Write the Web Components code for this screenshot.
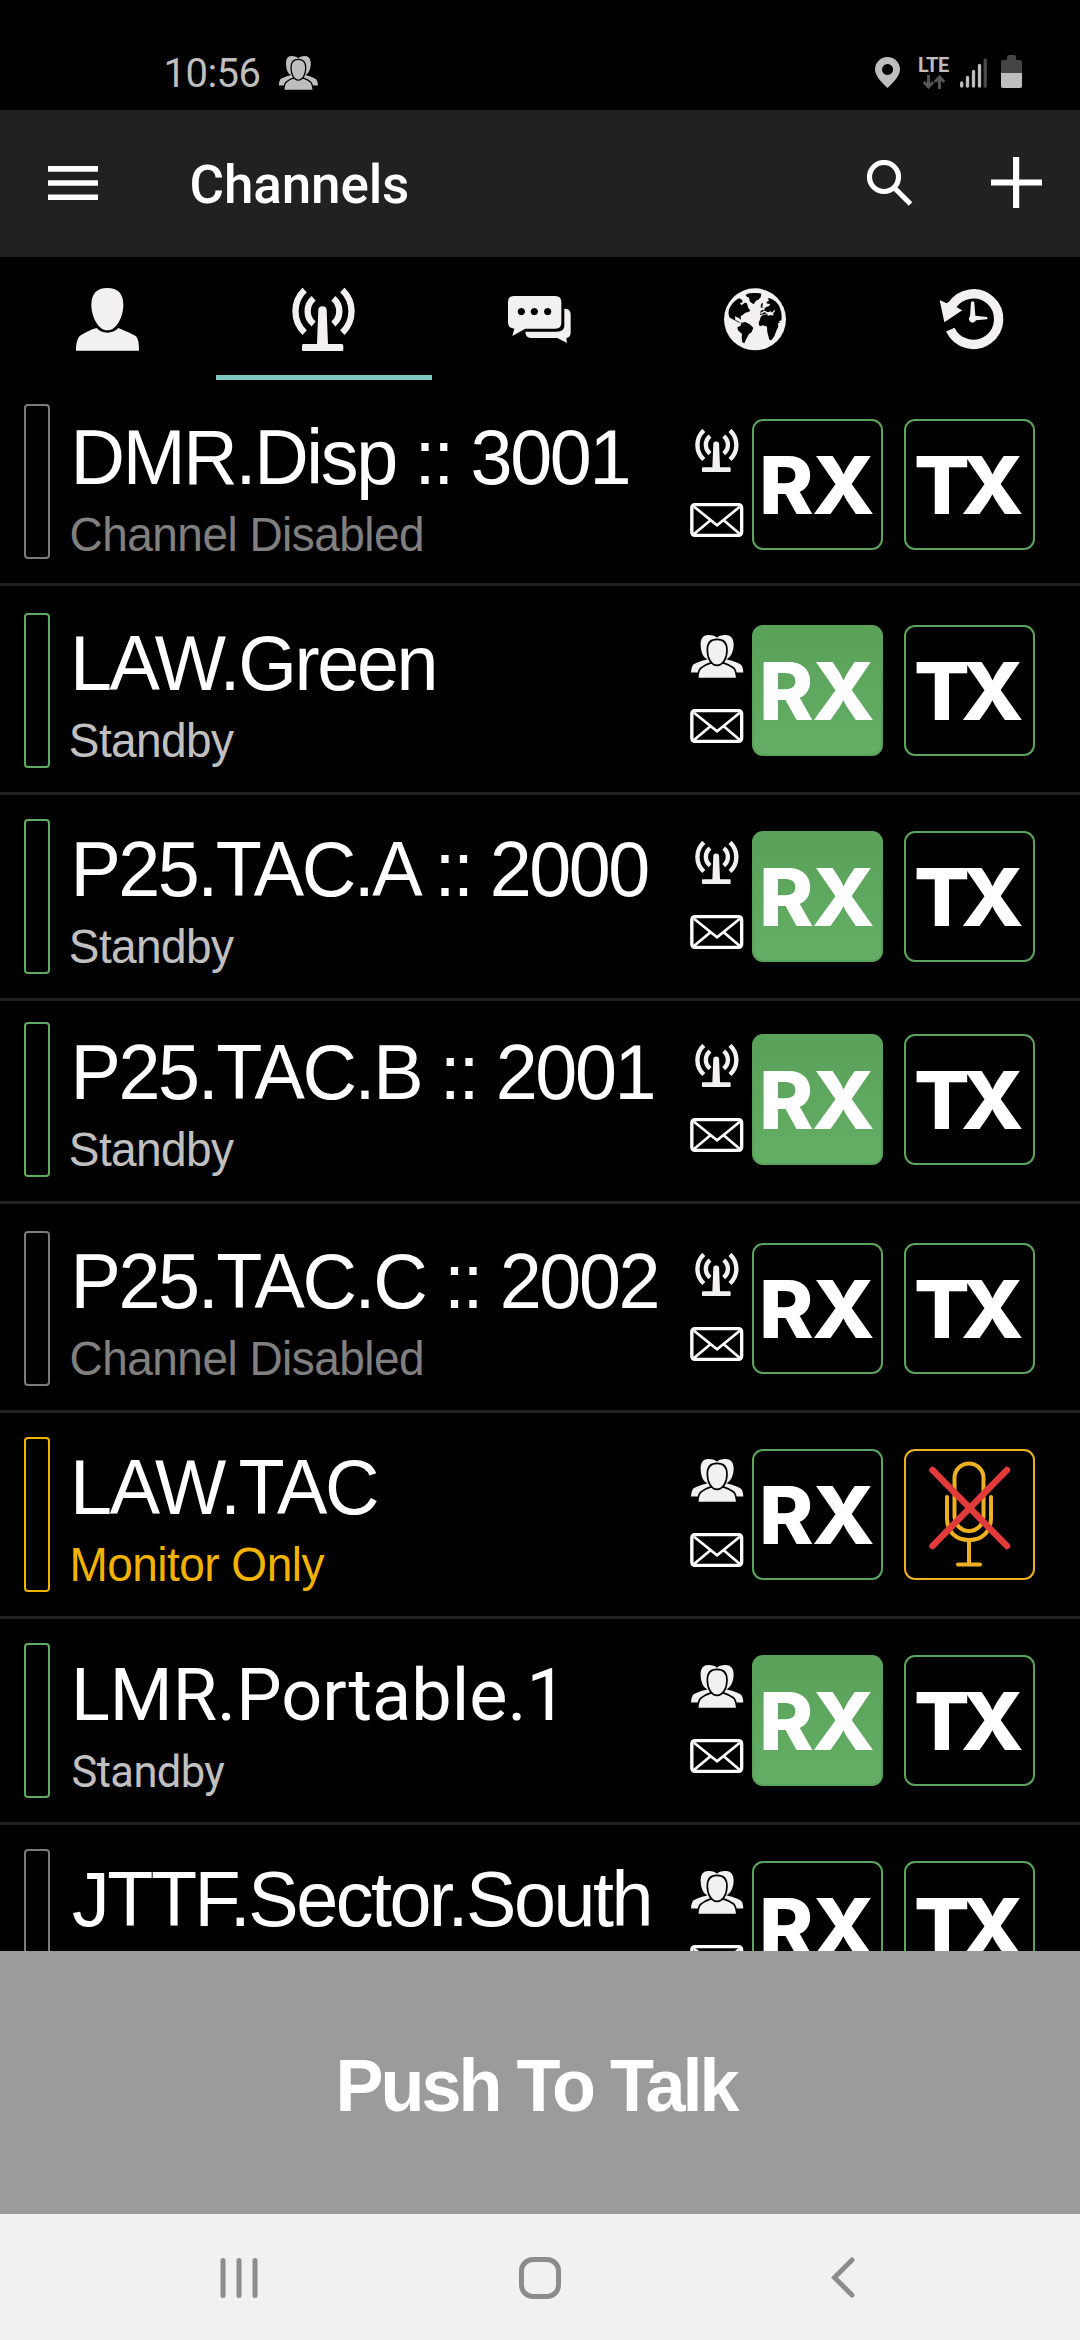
<!DOCTYPE html>
<html lang="en">
<head>
<meta charset="utf-8">
<title>Channels</title>
<style>
html,body{margin:0;padding:0;background:#000}
body{width:1080px;height:2340px;overflow:hidden;font-family:"Liberation Sans",sans-serif;color:#fff}
</style>
</head>
<body>
<ptt-app></ptt-app>
<script>
const ICONS = {
  person: ['0 0 240 240', `<g fill="currentColor"><path d="M118 24C150 24 166 42 166 74C166 112 144 151 118 151C92 151 70 112 70 74C70 42 86 24 118 24Z"/><path d="M24 212C24 190 28 175 36 167C50 158 70 148 86 144Q98 158 118 158Q138 158 151 144C165 150 190 160 203 168C211 176 213 190 213 212Z"/></g>`],
  antenna: ['24 24 190 189', `<g fill="none" stroke="currentColor" stroke-width="19"><path d="M62 30A88 88 0 0 0 62 158"/><path d="M89 55A50 50 0 0 0 89 132"/><path d="M175 30A88 88 0 0 1 175 158"/><path d="M148 55A50 50 0 0 1 148 132"/></g><path fill="currentColor" d="M103 90Q103 79 115.500 79Q128 79 128 90L132 192H174Q178 192 178 197V209Q178 213 174 213H58Q54 213 54 209V197Q54 192 58 192H99Z"/>`],
  chat: ['0 0 240 240', `<g fill="currentColor"><path fill-rule="evenodd" d="M41 48H166Q184 48 184 66V129Q184 146 166 146H76L37 168L43 146Q24 144 24 129V66Q24 48 41 48ZM64 84a11 11 0 1 0 .1 0ZM103 84a11 11 0 1 0 .1 0ZM143 84a11 11 0 1 0 .1 0Z"/><path d="M193 86Q212 86 212 103V158Q212 171 199 174L201 189L172 174H92Q76 172 76 155H170Q193 155 193 138Z"/></g>`],
  globe: ['3 0 240 240', `<circle cx="120" cy="118" r="93" fill="currentColor"/><g fill="#000"><path d="M92 45Q98 38 118 39Q132 38 139 41L137 52L130 59Q121 61 116 73L105 65L102 53Q94 52 92 45Z"/><path d="M72 55L81 59L83 67L75 69L79 76L90 68L96 70L99 82L106 92L100 96L91 98L83 105L77 109L78 119L70 113L60 109L61 120L68 123L75 128L78 129L75 130L63 123L50 116L43 112Q38 100 42 88Q50 68 68 57Z"/><path d="M79 128L91 126L104 133L115 143L110 156L102 162L92 180L88 190L82 187L80 173L81 162L69 151L67 142L77 137Z"/><path d="M162 54Q187 62 195 84Q202 104 199 121L191 124L195 129L189 129L190 140L184 152L178 169L169 181L163 179L157 157L156 140L144 136L134 139L131 130L137 112L140 107L157 102L158 107L170 105L174 107L176 101L160 97L151 102L135 105L137 93L143 89L146 83L157 78L165 73L154 70L156 65L163 61L158 57Z"/><path d="M144 68L142 80L145 82L137 83L138 72Z"/></g><g fill="none" stroke="currentColor" stroke-width="4"><path d="M137 101L148 94L158 99L166 96L171 101L179 91"/><path d="M144 90L151 80L160 77L164 72"/></g>`],
  history: ['6 0 240 240', `<path fill="none" stroke="currentColor" stroke-width="28" d="M61 149A76 76 0 1 0 65 78"/><path fill="currentColor" d="M29 60L50 70L69 58L74 79L97 91L43 127Z"/><path fill="currentColor" d="M123 67Q128 60 133 67L136 107L171 111Q175 115 171 118L138 121A11 11 0 1 1 120 109Z"/>`],
  group: ['0 0 160 130', `<g fill="currentColor"><path d="M54 0C68 0 78 4 81 9C84 4 94 0 108 0C124 0 131 13 131 29C131 49 122 70 109 73C128 78 148 84 154 91Q159 97 160 113H3Q4 97 9 90C15 84 34 78 53 73C40 70 32 51 32 29C32 13 38 0 54 0Z"/></g><g fill="currentColor" stroke="#000" stroke-width="5"><path d="M23 132C24 112 27 104 34 99Q44 90 61 85H102Q120 91 130 99Q138 106 141 132Z"/><path d="M81 13C101 13 111 25 111 45C111 70 99 92 81 92C64 92 52 70 52 45C52 25 62 13 81 13Z"/></g>`],
  mail: ['0 0 160 102', `<g fill="none" stroke="currentColor"><rect x="5.500" y="5" width="149" height="92" rx="9" stroke-width="10"/><path stroke-width="8" d="M12 11L81 67L149 11M62 51L12 93M100 51L149 93"/></g>`],
  mic: ['0 0 131 131', `<g fill="none" stroke="#edb020" stroke-width="4" stroke-linecap="round"><rect x="50.500" y="14.500" width="29" height="67.500" rx="14.500"/><path d="M43 48V69C43 83 52 91 65 91S87 83 87 69V48M65 91V115.500M54 115.500H76"/></g><path stroke="#e13a3a" stroke-width="6.500" stroke-linecap="round" d="M28.500 21L103 97M103 21L28.500 97"/>`],
  menu: ['0 0 50 34', `<path fill="#fff" d="M0 0h50v5.700H0zM0 14.200h50v5.500H0zM0 28.400h50v5.600H0z"/>`],
  search: ['0 0 46 46', `<g fill="none" stroke="#fff" stroke-width="5.200"><circle cx="17" cy="17" r="14.500"/><path d="M28 28.500L43.500 44"/></g>`],
  plus: ['0 0 51 51', `<path fill="#fff" d="M22 0h6.200v22.500H51v6H28.200V51H22V28.500H0v-6H22z"/>`],
  pin: ['0 0 25 31', `<path fill="#bebebe" fill-rule="evenodd" d="M12.500 0C19.500 0 25 5.500 25 12.500C25 19 18 25.500 12.500 31C7 25.500 0 19 0 12.500C0 5.500 5.500 0 12.500 0ZM12.500 7a5.500 5.500 0 1 0 .1 0Z"/>`],
  arrows: ['0 0 22 14', `<g fill="none" stroke="#555" stroke-width="3"><path d="M5.500 0V12M.900 7L5.500 12L10.100 7M16.500 14V2M11.900 7L16.500 2L21.100 7"/></g>`],
  signal: ['0 0 27 30', `<g stroke-width="3.300" stroke-linecap="round" stroke="#bebebe"><path d="M1.700 25V28M7.500 19.500V28M13.500 13.500V28M19.500 7.500V28"/><path stroke="#4a4a4a" d="M25.200 2V28"/></g>`],
  battery: ['0 0 21 33', `<path fill="#454545" d="M6 2Q6 0 8 0h5Q15 0 15 2V5H19Q21 5 21 7V18H0V7Q0 5 2 5H6Z"/><path fill="#bebebe" d="M0 18H21V31Q21 33 19 33H2Q0 33 0 31Z"/>`],
  recents: ['0 0 38 40', `<path stroke="#8c8c8c" stroke-width="5" stroke-linecap="round" d="M3 2.500V37.500M19 2.500V37.500M35 2.500V37.500"/>`],
  home: ['0 0 42 42', `<rect x="2.500" y="2.500" width="37" height="37" rx="11.500" fill="none" stroke="#8c8c8c" stroke-width="5"/>`],
  back: ['0 0 24 41', `<path fill="none" stroke="#8c8c8c" stroke-width="5" stroke-linecap="round" d="M21 3L3.500 20.500L21 38"/>`]
};

/* <ui-icon name w h> : one glyph from the icon table */
customElements.define('ui-icon', class extends HTMLElement {
  connectedCallback() {
    const [vb, body] = ICONS[this.getAttribute('name')];
    const w = this.getAttribute('w'), h = this.getAttribute('h');
    this.attachShadow({mode: 'open'}).innerHTML =
      `<style>:host{display:block;flex:none;width:${w}px;height:${h}px}svg{display:block;width:100%;height:100%}</style><svg viewBox="${vb}" preserveAspectRatio="none">${body}</svg>`;
  }
});

/* <fit-text w font lh sy> : a single line tracked so that its ink spans w pixels; sy stretches it upwards */
const ctx = document.createElement('canvas').getContext('2d');
customElements.define('fit-text', class extends HTMLElement {
  connectedCallback() {
    const text = this.textContent, w = +this.getAttribute('w'), font = this.getAttribute('font');
    ctx.font = font;
    const m = ctx.measureText(text);
    const ls = (w - m.actualBoundingBoxRight - m.actualBoundingBoxLeft) / (text.length - 1);
    const size = parseFloat(font.match(/([\d.]+)px/)[1]);
    this.attachShadow({mode: 'open'}).innerHTML =
      `<style>:host{display:block;flex:none;width:${w}px}span{display:block;white-space:pre;font:${font};line-height:${this.getAttribute('lh')}px;letter-spacing:${ls.toFixed(3)}px;margin-left:${m.actualBoundingBoxLeft.toFixed(2)}px;transform:scaleY(${this.getAttribute('sy') || 1});transform-origin:0 calc(50% + ${(size * .3465).toFixed(2)}px)}</style><span><slot></slot></span>`;
  }
});

customElements.define('status-bar', class extends HTMLElement {
  connectedCallback() {
    this.attachShadow({mode: 'open'}).innerHTML = `<style>
      :host{display:flex;height:110px;box-sizing:border-box;background:#000;color:#bebebe;align-items:flex-start;padding:55px 58px 0 166.500px}
      .g{margin:1px 0 0 18px}.sp{flex:1}.lte{display:flex;flex-direction:column;align-items:center;margin:0 11px 0 19px}
      </style>
      <fit-text w="93" lh="38" font="40px Roboto">10:56</fit-text>
      <ui-icon class="g" name="group" w="40" h="34"></ui-icon><div class="sp"></div>
      <ui-icon name="pin" w="25" h="31" style="margin-top:2px"></ui-icon>
      <div class="lte"><fit-text w="30" lh="20" font="700 20px Roboto">LTE</fit-text><ui-icon name="arrows" w="22" h="14"></ui-icon></div>
      <ui-icon name="signal" w="27" h="30" style="margin:3px 14px 0 0"></ui-icon>
      <ui-icon name="battery" w="21" h="33"></ui-icon>`;
  }
});

customElements.define('app-bar', class extends HTMLElement {
  connectedCallback() {
    this.attachShadow({mode: 'open'}).innerHTML = `<style>
      :host{display:flex;height:147px;box-sizing:border-box;background:#212121;align-items:flex-start;padding:0 38px 0 48px}
      fit-text{margin:2px 0 0 93.500px}.sp{flex:1}
      </style>
      <ui-icon name="menu" w="50" h="34" style="margin-top:56px"></ui-icon>
      <fit-text w="216.500" lh="147" font="500 53px Roboto">${this.getAttribute('heading')}</fit-text>
      <div class="sp"></div>
      <ui-icon name="search" w="46" h="46" style="margin:50px 78.500px 0 0"></ui-icon>
      <ui-icon name="plus" w="51" h="51" style="margin-top:47px"></ui-icon>`;
  }
});

customElements.define('tab-bar', class extends HTMLElement {
  connectedCallback() {
    this.attachShadow({mode: 'open'}).innerHTML = `<style>
      :host{display:flex;height:123px;background:#000;color:#f2f0f1}
      div{flex:1;display:flex;flex-direction:column;align-items:center;box-sizing:border-box;padding-top:23px;border-bottom:5px solid transparent}
      .on{border-color:#7cc8bf;padding-top:31px}
      </style>
      <div><ui-icon name="person" w="80" h="80"></ui-icon></div>
      <div class="on"><ui-icon name="antenna" w="63.300" h="63"></ui-icon></div>
      <div><ui-icon name="chat" w="80" h="80"></ui-icon></div>
      <div><ui-icon name="globe" w="80" h="80"></ui-icon></div>
      <div><ui-icon name="history" w="80" h="80"></ui-icon></div>`;
  }
});

customElements.define('key-button', class extends HTMLElement {
  connectedCallback() {
    const label = this.getAttribute('label');
    this.attachShadow({mode: 'open'}).innerHTML = `<style>
      :host{display:flex;flex:none;box-sizing:border-box;width:131px;height:131px;border:2px solid #5ca35c;border-radius:11px;color:#fff}
      :host([on]){background:linear-gradient(#5aa15a,#63ae64);border-color:#5ba25b}
      :host([muted]){border-color:#edb020}
      fit-text{margin-left:9px}:host([label=TX]) fit-text{margin-left:10px}
      ui-icon{margin:-2px}
      </style>` + (label
        ? `<fit-text w="${label === 'TX' ? 106 : 110}" lh="126" sy=".96" font="800 82.500px Inter">${label}</fit-text>`
        : `<ui-icon name="mic" w="131" h="131"></ui-icon>`);
  }
});

customElements.define('channel-row', class extends HTMLElement {
  connectedCallback() {
    const a = (n, d) => this.getAttribute(n) || d;
    const roboto = this.hasAttribute('roboto');
    const state = a('state');
    const bar = {standby: '#60ab62', disabled: '#7b7b7b', monitor: '#f2b200'}[state];
    const sub = {standby: '#c0c0c0', disabled: '#808080', monitor: '#f2b200'}[state];
    const label = {standby: 'Standby', disabled: 'Channel Disabled', monitor: 'Monitor Only'}[state];
    const sw = roboto ? 152.8 : {standby: 163.3, disabled: 350.6, monitor: 252}[state];
    const sx = roboto ? 2.5 : {standby: .8, disabled: 1.5, monitor: 2.4}[state];
    const shift = +a('shift', 0);
    this.attachShadow({mode: 'open'}).innerHTML = `<style>
      :host{display:flex;flex:none;align-items:flex-start;box-sizing:content-box;height:155px;padding:${a('top')}px 45px 24px 24px;border-bottom:3px solid #212121}
      .bar{flex:none;box-sizing:border-box;width:26px;height:155px;border:2px solid ${bar};border-radius:4px}
      .text{flex:1;margin:${shift + (roboto ? 3 : 1)}px 0 0 20px}
      .name{margin-left:${a('x', 6)}px}
      .sub{margin-left:${sx}px;color:${sub}}
      .kinds{flex:none;display:flex;flex-direction:column;align-items:center;width:54px;margin:${22 + shift}px 8px 0 0;color:#f2f0f1}
      .mail{color:#fff;margin-top:31px}
      .keys{display:flex;gap:21px;margin-top:${12 + shift}px}
      </style>
      <div class="bar"></div>
      <div class="text">
        <fit-text class="name" w="${a('w')}" lh="100" ${roboto ? 'font="72px Roboto"' : `sy="1.04" font="75.5px 'Liberation Sans'"`}>${a('name')}</fit-text>
        ${this.hasAttribute('bare') ? '' : `<fit-text class="sub" w="${sw}" lh="54" ${roboto ? 'font="43.5px Roboto"' : `sy="1.04" font="46px 'Liberation Sans'"`}>${label}</fit-text>`}
      </div>
      <div class="kinds">
        ${a('kind') === 'antenna' ? '<ui-icon name="antenna" w="44" h="43"></ui-icon>' : '<ui-icon name="group" w="53.300" h="43"></ui-icon>'}
        <ui-icon class="mail" name="mail" w="53.500" h="34"></ui-icon>
      </div>
      <div class="keys"><key-button label="RX" ${this.hasAttribute('rx') ? 'on' : ''}></key-button>${state === 'monitor' ? '<key-button muted></key-button>' : '<key-button label="TX"></key-button>'}</div>`;
  }
});

customElements.define('talk-button', class extends HTMLElement {
  connectedCallback() {
    this.attachShadow({mode: 'open'}).innerHTML = `<style>
      :host{display:flex;height:263px;background:#9b9b9b;color:#fff;justify-content:center}
      fit-text{margin-top:7px}
      </style><fit-text w="401" lh="257" sy="1.04" font="bold 72px 'Liberation Sans'">Push To Talk</fit-text>`;
  }
});

customElements.define('nav-bar', class extends HTMLElement {
  connectedCallback() {
    this.attachShadow({mode: 'open'}).innerHTML = `<style>
      :host{display:flex;height:126px;box-sizing:border-box;background:#f1f1f1;justify-content:space-between;padding:43px 225px 0 219.500px}
      </style><ui-icon name="recents" w="38" h="40" style="margin-top:1px"></ui-icon><ui-icon name="home" w="42" h="42" style="margin-right:8.500px"></ui-icon><ui-icon name="back" w="24" h="41"></ui-icon>`;
  }
});

customElements.define('ptt-app', class extends HTMLElement {
  connectedCallback() {
    this.attachShadow({mode: 'open'}).innerHTML = `<style>
      :host{display:flex;flex-direction:column;width:1080px;height:2340px;background:#000}
      :host>*{flex:none}
      main{display:flex;flex-direction:column;height:1571px;overflow:hidden}
      </style>
      <status-bar></status-bar>
      <app-bar heading="Channels"></app-bar>
      <tab-bar></tab-bar>
      <main>
        <channel-row name="DMR.Disp :: 3001" w="552" x="6.500" kind="antenna" state="disabled" top="24" shift="3"></channel-row>
        <channel-row name="LAW.Green" w="358.500" kind="group" state="standby" rx top="27"></channel-row>
        <channel-row name="P25.TAC.A :: 2000" w="576" x="6.500" kind="antenna" state="standby" rx top="24"></channel-row>
        <channel-row name="P25.TAC.B :: 2001" w="577" x="6.500" kind="antenna" state="standby" rx top="21"></channel-row>
        <channel-row name="P25.TAC.C :: 2002" w="581" x="6.500" kind="antenna" state="disabled" top="27"></channel-row>
        <channel-row name="LAW.TAC" w="301" kind="group" state="monitor" top="24"></channel-row>
        <channel-row name="LMR.Portable.1" w="476.500" kind="group" state="standby" roboto rx top="24"></channel-row>
        <channel-row name="JTTF.Sector.South" w="576.500" x="3" kind="group" state="disabled" bare top="24"></channel-row>
      </main>
      <talk-button></talk-button>
      <nav-bar></nav-bar>`;
  }
});
</script>
</body>
</html>
